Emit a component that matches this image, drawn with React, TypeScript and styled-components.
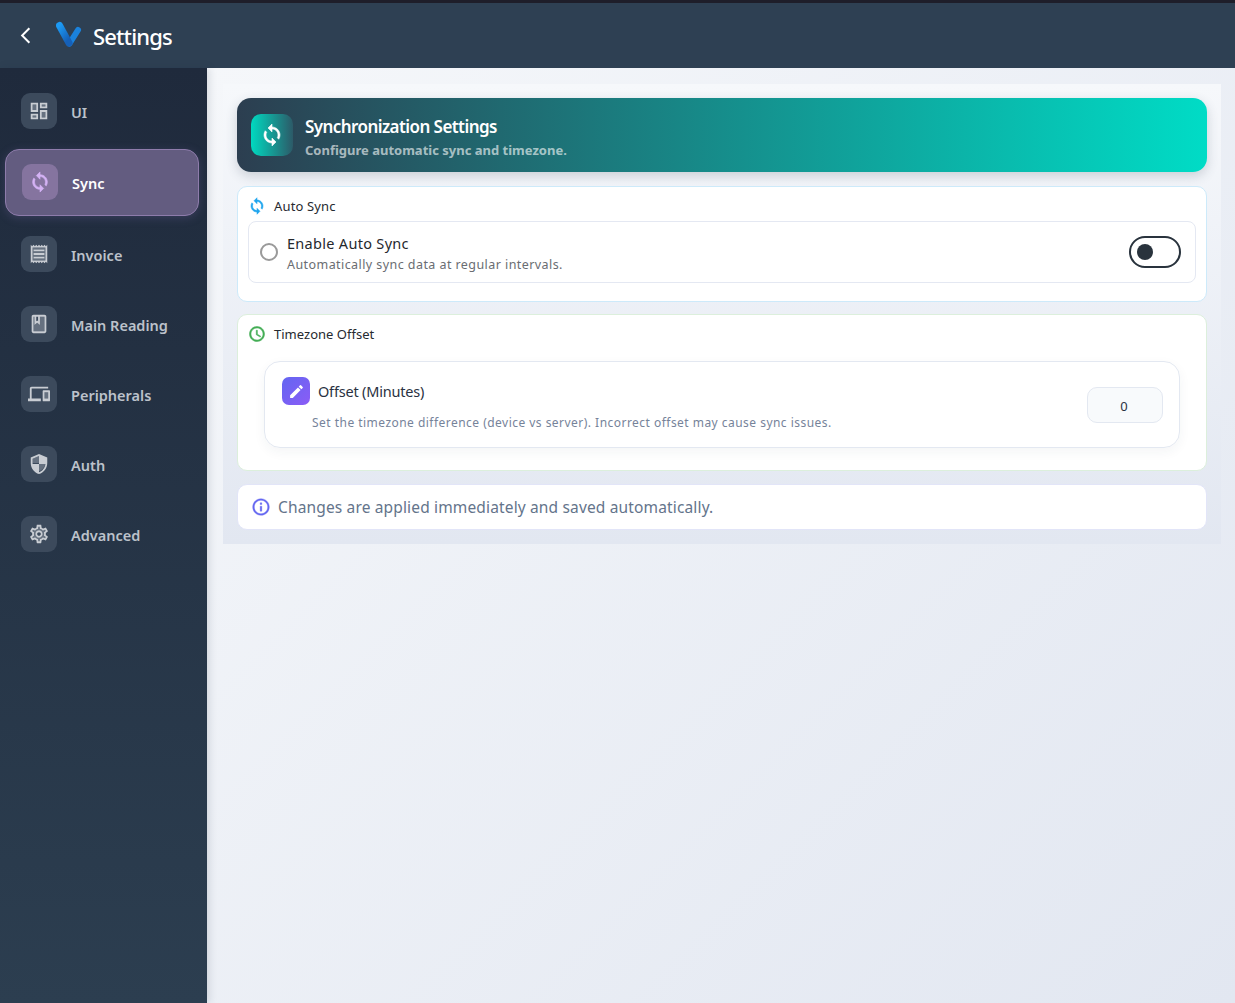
import React from 'react'
import styled, { createGlobalStyle } from 'styled-components'
import {
    MdArrowBackIosNew,
    MdSync,
    MdAccessTime,
    MdEdit,
    MdInfoOutline,
} from 'react-icons/md'

const GlobalStyle = createGlobalStyle`
    html, body {
        margin: 0;
        padding: 0;
        height: 100%;
    }
    body {
        font-family: "Noto Sans", "Liberation Sans", sans-serif;
        overflow: hidden;
    }
`

const Page = styled.div`
    width: 1235px;
    height: 1003px;
    display: flex;
    flex-direction: column;
`

const TopBar = styled.header`
    height: 65px;
    flex: none;
    border-top: 3px solid #1e1e2a;
    background: #2e4053;
    display: flex;
    align-items: center;
    box-sizing: content-box;
    padding-left: 13px;
    color: #fff;
`

const BackButton = styled.div`
    width: 24px;
    height: 24px;
    font-size: 19px;
    display: flex;
    align-items: center;
    justify-content: center;
`

const Logo = styled.svg`
    width: 30px;
    height: 30px;
    margin-left: 19px;
    margin-top: -1px;
`

const TopTitle = styled.h1`
    margin: 0 0 0 7px;
    font-size: 22px;
    font-weight: 500;
    letter-spacing: -0.85px;
    line-height: 30px;
`

const Body = styled.div`
    flex: 1;
    display: flex;
    min-height: 0;
`

const Sidebar = styled.nav`
    width: 207px;
    flex: none;
    position: relative;
    z-index: 1;
    box-sizing: border-box;
    padding: 11px 8px 0 5px;
    background: linear-gradient(180deg, #1f2a3c 0%, #2c3e50 100%);
    box-shadow: 2px 0 8px rgba(30, 42, 60, 0.15);
    display: flex;
    flex-direction: column;
`

const NavItem = styled.div<{ $active?: boolean }>`
    box-sizing: border-box;
    height: ${p => (p.$active ? '67px' : '66px')};
    margin-bottom: ${p => (p.$active ? '6px' : '4px')};
    padding-left: 16px;
    display: flex;
    align-items: center;
    gap: 14px;
    border-radius: 14px;
    border: ${p => (p.$active ? '1.5px solid #8e7cab' : 'none')};
    background: ${p => (p.$active ? '#635c80' : 'transparent')};
    box-shadow: ${p => (p.$active ? '0 2px 10px rgba(130, 110, 180, 0.25)' : 'none')};
    color: ${p => (p.$active ? '#ffffff' : '#bcc2cb')};
    font-size: 14.5px;
    font-weight: 600;
`

const NavIcon = styled.span<{ $active?: boolean }>`
    width: 36px;
    height: 36px;
    flex: none;
    border-radius: 9px;
    display: flex;
    align-items: center;
    justify-content: center;
    font-size: 22px;
    margin-top: -2px;
    background: ${p => (p.$active ? '#85749f' : '#3c4a5c')};
    color: ${p => (p.$active ? '#d5b3f5' : '#c9cdd3')};
    svg path:not([fill='none']) {
        stroke-width: ${p => (p.$active ? '0.7px' : '0')};
    }
`

const Main = styled.main`
    flex: 1;
    padding: 16px 14px 0 16px;
    background: linear-gradient(135deg, #f5f7fa 0%, #e2e7f1 100%);
    display: flex;
    flex-direction: column;
    align-items: stretch;
`

const Panel = styled.section`
    padding: 14px;
    background: linear-gradient(180deg, #f6f8fb 0%, #e2e7f1 100%);
    display: flex;
    flex-direction: column;
    gap: 13px;
`

const Banner = styled.div`
    height: 74px;
    margin-bottom: 1px;
    box-sizing: border-box;
    padding: 0 14px;
    border-radius: 14px;
    background: linear-gradient(90deg, #2c3e50 0%, #00dcc6 100%);
    box-shadow: 0 4px 12px rgba(44, 62, 80, 0.2);
    display: flex;
    align-items: center;
    gap: 12px;
`

const BannerIcon = styled.div`
    width: 42px;
    height: 42px;
    border-radius: 10px;
    background: linear-gradient(90deg, #00d9c0 0%, #2c5a68 100%);
    color: #fff;
    font-size: 24px;
    display: flex;
    align-items: center;
    justify-content: center;
    svg path:not([fill='none']) {
        stroke-width: 0.6px;
    }
`

const BannerText = styled.div`
    display: flex;
    flex-direction: column;
    gap: 2px;
    padding-top: 3px;
`

const BannerTitle = styled.div`
    color: #fff;
    font-size: 17px;
    font-weight: 600;
    letter-spacing: -0.57px;
    line-height: 24px;
`

const BannerSub = styled.div`
    color: rgba(255, 255, 255, 0.62);
    font-size: 13px;
    font-weight: 700;
    line-height: 18px;
`

const Card = styled.div<{ $tint: string }>`
    background: #fff;
    border: 1px solid ${p => p.$tint};
    border-radius: 10px;
    box-sizing: border-box;
`

const SyncCard = styled(Card)`
    height: 115.5px;
    margin-bottom: -0.5px;
    padding: 0 10px;
`

const ZoneCard = styled(Card)`
    height: 156.5px;
    padding: 0 26px 0 10px;
`

const CardHeading = styled.div<{ $color: string; $spacing: string }>`
    height: 37px;
    display: flex;
    align-items: center;
    gap: 8px;
    color: #262a30;
    font-size: 13px;
    letter-spacing: ${p => p.$spacing};
    svg {
        color: ${p => p.$color};
        font-size: 18px;
        flex: none;
    }
    svg path:not([fill='none']) {
        stroke-width: 0.7px;
    }
`

const ToggleRow = styled.div`
    height: 62px;
    margin-top: -3px;
    box-sizing: border-box;
    border: 1px solid #e4e8f2;
    border-radius: 8px;
    padding: 0 14px 0 11px;
    display: flex;
    align-items: center;
`

const Radio = styled.span`
    width: 18px;
    height: 18px;
    box-sizing: border-box;
    border: 2px solid #9a9a9a;
    border-radius: 50%;
    flex: none;
`

const ToggleText = styled.div`
    margin-left: 9px;
    padding-top: 3px;
    flex: 1;
`

const ToggleTitle = styled.div`
    color: #25282d;
    font-size: 14.5px;
    line-height: 20px;
    letter-spacing: 0.3px;
`

const ToggleSub = styled.div`
    color: #6a6d72;
    font-size: 12.5px;
    line-height: 18px;
    margin-top: 3px;
    letter-spacing: 0.43px;
`

const Switch = styled.span`
    width: 52px;
    height: 32px;
    box-sizing: border-box;
    border: 2px solid #29333d;
    border-radius: 16px;
    padding-left: 6px;
    display: flex;
    align-items: center;
`

const Knob = styled.span`
    width: 16px;
    height: 16px;
    border-radius: 50%;
    background: #29333d;
`

const OffsetBox = styled.div`
    height: 87px;
    margin: 9px 0 0 16px;
    box-sizing: border-box;
    border: 1.5px solid #e3e8f1;
    border-radius: 16px;
    box-shadow: 0 4px 12px rgba(44, 62, 80, 0.05);
    padding: 0 16px 0 17px;
    display: flex;
    align-items: center;
    justify-content: space-between;
`

const OffsetLabel = styled.div`
    display: flex;
    flex-direction: column;
    gap: 9px;
    margin-top: -1px;
`

const OffsetTitleRow = styled.div`
    display: flex;
    align-items: center;
    gap: 8px;
    color: #2a3242;
    font-size: 14.5px;
    letter-spacing: -0.2px;
`

const EditBadge = styled.span`
    width: 28px;
    height: 28px;
    border-radius: 7px;
    background: linear-gradient(135deg, #6366f1 0%, #8b5cf6 100%);
    color: #fff;
    font-size: 17px;
    display: flex;
    align-items: center;
    justify-content: center;
`

const OffsetHint = styled.div`
    margin-left: 30px;
    color: #76839a;
    font-size: 12px;
    line-height: 17px;
    letter-spacing: 0.47px;
`

const OffsetInput = styled.div`
    width: 76px;
    height: 36px;
    box-sizing: border-box;
    border: 1.5px solid #e3e8f1;
    border-radius: 10px;
    background: #f8fafc;
    color: #2a3242;
    font-size: 13px;
    display: flex;
    align-items: center;
    justify-content: center;
    padding: 2px 2px 0 0;
`

const InfoCard = styled(Card)`
    height: 46px;
    padding: 1px 0 0 13px;
    display: flex;
    align-items: center;
    gap: 7px;
    color: #64748b;
    font-size: 15.5px;
    letter-spacing: 0.15px;
    svg {
        color: #6366f1;
        font-size: 20px;
        flex: none;
    }
    svg path:not([fill='none']) {
        stroke-width: 0.4px;
    }
`

// material two-tone glyphs, not exported by react-icons
const TwoTone = ({ faint, solid }: { faint: string; solid: string }) => (
    <svg width="1em" height="1em" viewBox="0 0 24 24" fill="currentColor">
        <path opacity="0.3" d={faint} />
        <path d={solid} />
    </svg>
)

const navItems = [
    {
        label: 'UI',
        icon: (
            <TwoTone
                faint="M5 5h4v6H5zm10 8h4v6h-4zM5 17h4v2H5zM15 5h4v2h-4z"
                solid="M3 13h8V3H3v10zm2-8h4v6H5V5zm8 16h8V11h-8v10zm2-8h4v6h-4v-6zM13 3v6h8V3h-8zm6 4h-4V5h4v2zM3 21h8v-6H3v6zm2-4h4v2H5v-2z"
            />
        ),
    },
    { label: 'Sync', icon: <MdSync />, active: true },
    {
        label: 'Invoice',
        icon: (
            <TwoTone
                faint="M5 19.09h14V4.91H5v14.18zM6 7h12v2H6V7zm0 4h12v2H6v-2zm0 4h12v2H6v-2z"
                solid="M18 7H6v2h12V7zM18 11H6v2h12v-2zM18 15H6v2h12v-2zM3 22l1.5-1.5L6 22l1.5-1.5L9 22l1.5-1.5L12 22l1.5-1.5L15 22l1.5-1.5L18 22l1.5-1.5L21 22V2l-1.5 1.5L18 2l-1.5 1.5L15 2l-1.5 1.5L12 2l-1.5 1.5L9 2 7.5 3.5 6 2 4.5 3.5 3 2v20zM5 4.91h14v14.18H5V4.91z"
            />
        ),
    },
    {
        label: 'Main Reading',
        icon: (
            <TwoTone
                faint="M13 13l-3-2.25L7 13V4H6v16h12V4h-5z"
                solid="M18 2H6c-1.1 0-2 .9-2 2v16c0 1.1.9 2 2 2h12c1.1 0 2-.9 2-2V4c0-1.1-.9-2-2-2zM9 4h2v5l-1-.75L9 9V4zm9 16H6V4h1v9l3-2.25L13 13V4h5v16z"
            />
        ),
    },
    {
        label: 'Peripherals',
        icon: (
            <TwoTone
                faint="M18 10h4v7h-4z"
                solid="M4 6h18V4H4c-1.1 0-2 .9-2 2v11H0v3h14v-3H4V6zm19 2h-6c-.55 0-1 .45-1 1v10c0 .55.45 1 1 1h6c.55 0 1-.45 1-1V9c0-.55-.45-1-1-1zm-1 9h-4v-7h4v7z"
            />
        ),
    },
    {
        label: 'Auth',
        icon: (
            <TwoTone
                faint="M12 3.19L5 6.3V11h7V3.19zM12 11v8.93c3.72-1.15 6.47-4.82 7-8.93h-7z"
                solid="M12 1L3 5v6c0 5.55 3.84 10.74 9 12 5.16-1.26 9-6.45 9-12V5l-9-4zm0 10.99h7c-.53 4.12-3.28 7.79-7 8.94V12H5V6.3l7-3.11v8.8z"
            />
        ),
    },
    {
        label: 'Advanced',
        icon: (
            <TwoTone
                faint="M19.28 8.6l-.7-1.21-1.27.51-1.06.43-.91-.7c-.39-.3-.8-.54-1.23-.71l-1.06-.43-.16-1.13L12.7 4h-1.39l-.19 1.35-.16 1.13-1.06.44c-.41.17-.82.41-1.25.73l-.9.68-1.05-.42-1.27-.52-.7 1.21 1.08.84.89.7-.14 1.13c-.03.3-.05.53-.05.73s.02.43.05.73l.14 1.13-.89.7-1.08.84.7 1.21 1.27-.51 1.06-.43.91.7c.39.3.8.54 1.23.71l1.06.43.16 1.13.19 1.36h1.39l.19-1.35.16-1.13 1.06-.43c.41-.17.82-.41 1.25-.73l.9-.68 1.04.42 1.27.51.7-1.21-1.08-.84-.89-.7.14-1.13c.04-.31.05-.52.05-.73 0-.21-.02-.43-.05-.73l-.14-1.13.89-.7 1.1-.84zM12 16c-2.21 0-4-1.79-4-4s1.79-4 4-4 4 1.79 4 4-1.79 4-4 4z"
                solid="M19.43 12.98c.04-.32.07-.64.07-.98 0-.34-.03-.66-.07-.98l2.11-1.65c.19-.15.24-.42.12-.64l-2-3.46c-.09-.16-.26-.25-.44-.25-.06 0-.12.01-.17.03l-2.49 1c-.52-.4-1.08-.73-1.69-.98l-.38-2.65C14.46 2.18 14.25 2 14 2h-4c-.25 0-.46.18-.49.42l-.38 2.65c-.61.25-1.17.59-1.69.98l-2.49-1c-.06-.02-.12-.03-.18-.03-.17 0-.34.09-.43.25l-2 3.46c-.13.22-.07.49.12.64l2.11 1.65c-.04.32-.07.65-.07.98 0 .33.03.66.07.98l-2.11 1.65c-.19.15-.24.42-.12.64l2 3.46c.09.16.26.25.44.25.06 0 .12-.01.17-.03l2.49-1c.52.4 1.08.73 1.69.98l.38 2.65c.03.24.24.42.49.42h4c.25 0 .46-.18.49-.42l.38-2.65c.61-.25 1.17-.59 1.69-.98l2.49 1c.06.02.12.03.18.03.17 0 .34-.09.43-.25l2-3.46c.12-.22.07-.49-.12-.64l-2.11-1.65zm-1.98-1.71c.04.31.05.52.05.73 0 .21-.02.43-.05.73l-.14 1.13.89.7 1.08.84-.7 1.21-1.27-.51-1.04-.42-.9.68c-.43.32-.84.56-1.25.73l-1.06.43-.16 1.13-.2 1.35h-1.4l-.19-1.35-.16-1.13-1.06-.43c-.43-.18-.83-.41-1.23-.71l-.91-.7-1.06.43-1.27.51-.7-1.21 1.08-.84.89-.7-.14-1.13c-.03-.31-.05-.54-.05-.74s.02-.43.05-.73l.14-1.13-.89-.7-1.08-.84.7-1.21 1.27.51 1.04.42.9-.68c.43-.32.84-.56 1.25-.73l1.06-.43.16-1.13.2-1.35h1.39l.19 1.35.16 1.13 1.06.43c.43.18.83.41 1.23.71l.91.7 1.06-.43 1.27-.51.7 1.21-1.07.85-.89.7.14 1.13zM12 8c-2.21 0-4 1.79-4 4s1.79 4 4 4 4-1.79 4-4-1.79-4-4-4zm0 6c-1.1 0-2-.9-2-2s.9-2 2-2 2 .9 2 2-.9 2-2 2z"
            />
        ),
    },
]

export default function App() {
    return (
        <Page>
            <GlobalStyle />
            <TopBar>
                <BackButton>
                    <MdArrowBackIosNew />
                </BackButton>
                <Logo viewBox="0 0 30 30" fill="none">
                    <defs>
                        <linearGradient id="vLeft" x1="0" y1="0" x2="0.6" y2="1">
                            <stop offset="0" stopColor="#1c9af4" />
                            <stop offset="1" stopColor="#1560b8" />
                        </linearGradient>
                    </defs>
                    <path d="M22 10 L13.5 23.5" stroke="#1a82dc" strokeWidth="6" strokeLinecap="round" />
                    <path d="M3.5 5.5 L13 23" stroke="url(#vLeft)" strokeWidth="7" strokeLinecap="round" />
                </Logo>
                <TopTitle>Settings</TopTitle>
            </TopBar>
            <Body>
                <Sidebar>
                    {navItems.map(item => (
                        <NavItem key={item.label} $active={item.active}>
                            <NavIcon $active={item.active}>{item.icon}</NavIcon>
                            {item.label}
                        </NavItem>
                    ))}
                </Sidebar>
                <Main>
                    <Panel>
                        <Banner>
                            <BannerIcon>
                                <MdSync />
                            </BannerIcon>
                            <BannerText>
                                <BannerTitle>Synchronization Settings</BannerTitle>
                                <BannerSub>Configure automatic sync and timezone.</BannerSub>
                            </BannerText>
                        </Banner>
                        <SyncCard $tint="#cdeafa">
                            <CardHeading $color="#1ea5ee" $spacing="0.15px">
                                <MdSync />
                                Auto Sync
                            </CardHeading>
                            <ToggleRow>
                                <Radio />
                                <ToggleText>
                                    <ToggleTitle>Enable Auto Sync</ToggleTitle>
                                    <ToggleSub>Automatically sync data at regular intervals.</ToggleSub>
                                </ToggleText>
                                <Switch>
                                    <Knob />
                                </Switch>
                            </ToggleRow>
                        </SyncCard>
                        <ZoneCard $tint="#dcefdc">
                            <CardHeading $color="#43ad55" $spacing="0.02px">
                                <MdAccessTime />
                                Timezone Offset
                            </CardHeading>
                            <OffsetBox>
                                <OffsetLabel>
                                    <OffsetTitleRow>
                                        <EditBadge>
                                            <MdEdit />
                                        </EditBadge>
                                        Offset (Minutes)
                                    </OffsetTitleRow>
                                    <OffsetHint>
                                        Set the timezone difference (device vs server). Incorrect offset may cause sync issues.
                                    </OffsetHint>
                                </OffsetLabel>
                                <OffsetInput>0</OffsetInput>
                            </OffsetBox>
                        </ZoneCard>
                        <InfoCard $tint="#e2e5f8">
                            <MdInfoOutline />
                            Changes are applied immediately and saved automatically.
                        </InfoCard>
                    </Panel>
                </Main>
            </Body>
        </Page>
    )
}
